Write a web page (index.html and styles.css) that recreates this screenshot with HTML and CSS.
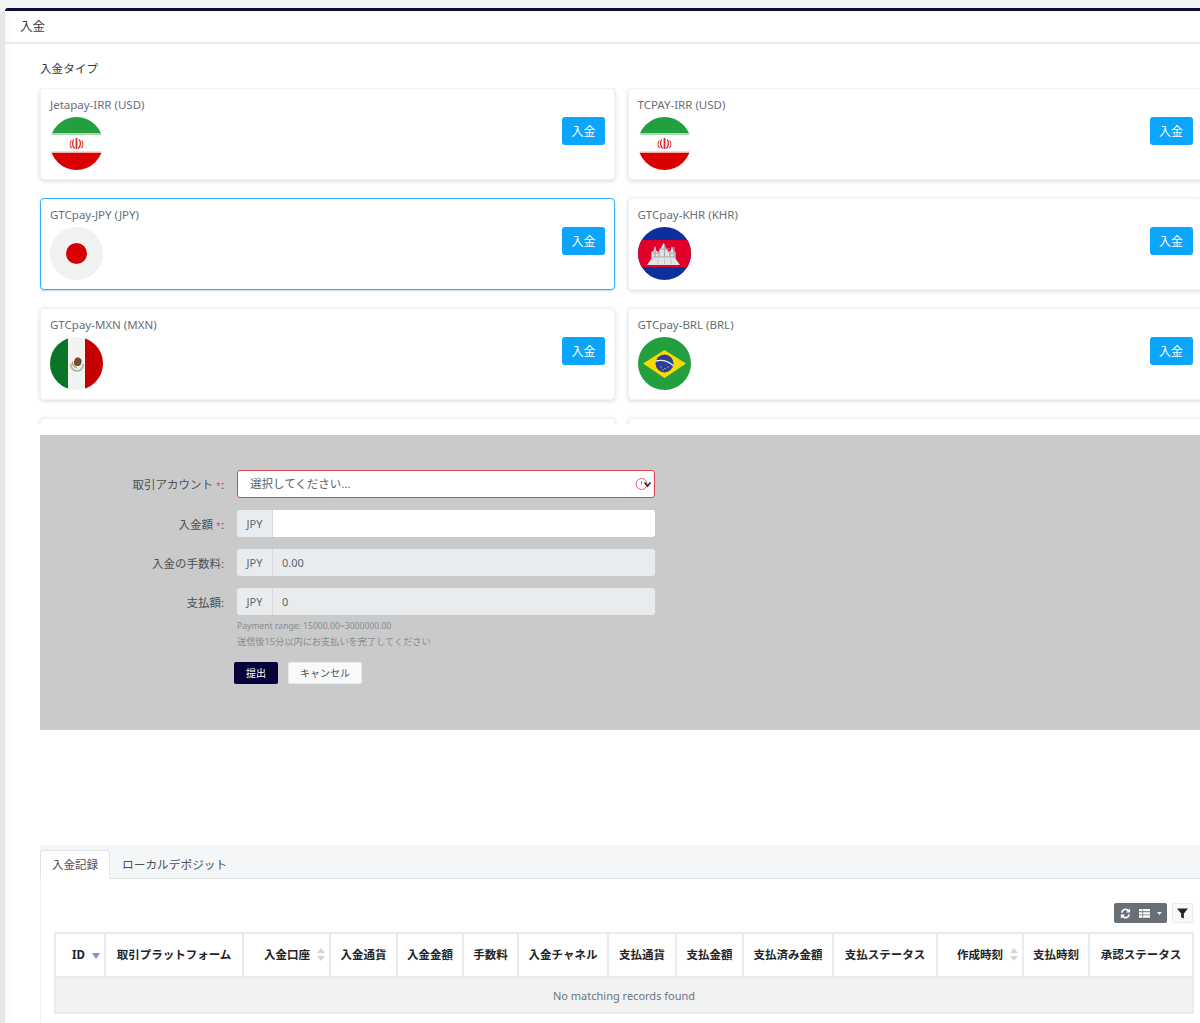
FILE: index.html
```html
<!DOCTYPE html>
<html lang="ja">
<head>
<meta charset="utf-8">
<title>入金</title>
<link rel="stylesheet" href="styles.css">
</head>
<body>
<svg class="defs" width="0" height="0" aria-hidden="true">
  <defs>
    <clipPath id="disc"><circle cx="26.5" cy="26.5" r="26.5"/></clipPath>
    <symbol id="iran" viewBox="0 0 53 53">
      <g clip-path="url(#disc)">
        <rect width="53" height="53" fill="#fff"/>
        <rect width="53" height="16" fill="#239f40"/>
        <rect y="16" width="53" height="2" fill="#a9d9b5"/>
        <rect y="36" width="53" height="17" fill="#da0000"/>
        <rect y="34.500" width="53" height="1.500" fill="#f0b0b0"/>
        <g fill="none" stroke="#dc2828">
          <path d="M26.500 21v11" stroke-width="1.800"/>
          <path d="M23.800 22.500c-2 3-1.400 7 .9 9M29.200 22.500c2 3 1.400 7-.9 9" stroke-width="1.300"/>
          <path d="M21.300 23.500c-1.800 2.600-1.400 5.800.3 7.500M31.700 23.500c1.800 2.600 1.400 5.800-.3 7.500" stroke-width="1.100"/>
        </g>
      </g>
    </symbol>
    <symbol id="japan" viewBox="0 0 53 53">
      <circle cx="26.500" cy="26.500" r="26.500" fill="#f0f1f1"/>
      <circle cx="26.500" cy="26.500" r="10.500" fill="#d80000"/>
    </symbol>
    <symbol id="cambodia" viewBox="0 0 53 53">
      <g clip-path="url(#disc)">
        <rect width="53" height="53" fill="#0c2f9c"/>
        <rect y="13" width="53" height="27" fill="#e0002b"/>
        <path d="M9 38l4.500-6.500V25l2-1 1.500-5 1.500 5 2 1 1-2 1.500-2 2.500-5 2.500 5 1.500 2 1 2 2-1 1.500-5 1.500 5 2 1v6.500l4.500 6.500z" fill="#e4e4e4"/>
        <path d="M15 26h7M31 26h7M21 22h11" stroke="#9a9a9a" stroke-width="1"/>
        <path d="M15 30h23" stroke="#a5a5a5" stroke-width="1"/>
        <path d="M17 20v10M26.500 17v13M36 20v10M21 25v5M32 25v5" stroke="#ababab" stroke-width="1.200"/>
        <path d="M20 32v5M26.500 32v5M33 32v5" stroke="#c4c4c4" stroke-width="1"/>
      </g>
    </symbol>
    <symbol id="mexico" viewBox="0 0 53 53">
      <g clip-path="url(#disc)">
        <rect width="53" height="53" fill="#f1f3f3"/>
        <rect width="18" height="53" fill="#0a7526"/>
        <rect x="35" width="18" height="53" fill="#c40000"/>
        <path d="M24 26c0-3 1-5.500 3.500-5.500S32 22 31.500 25 30 29 28 29s-4 0-4-3z" fill="#7a4a35"/>
        <path d="M20.500 27c1 5 4 7 6.500 7s5.500-2 6.500-7" fill="none" stroke="#9fb79a" stroke-width="1.500"/>
        <path d="M22.500 24.500c-.5 3 1.500 6 4.500 6.500" fill="none" stroke="#c9a866" stroke-width="1.500"/>
      </g>
    </symbol>
    <symbol id="brazil" viewBox="0 0 53 53">
      <g clip-path="url(#disc)">
        <rect width="53" height="53" fill="#239f40"/>
        <path d="M5 26.500L26.500 13 48 26.500 26.500 41z" fill="#f8dc00"/>
        <circle cx="26.500" cy="26.500" r="9" fill="#2b3f94"/>
        <path d="M18 24c6-1.500 12 0 17 4.500" fill="none" stroke="#e8edf5" stroke-width="1.400"/>
        <path d="M23 30h.1M27 31.500h.1M30 30h.1M25 33h.1" stroke="#fff" stroke-width="1" stroke-linecap="round"/>
      </g>
    </symbol>
  </defs>
</svg>

<main class="page">
  <header class="page-head">入金</header>
  <div class="page-body">
    <h2 class="section-title">入金タイプ</h2>
    <div class="card-scroll">
      <div class="card-grid">
        <article class="card">
          <div class="card-info"><div class="card-name">Jetapay-IRR (USD)</div><svg class="flag"><use href="#iran"/></svg></div>
          <button class="btn-pay" type="button">入金</button>
        </article>
        <article class="card">
          <div class="card-info"><div class="card-name">TCPAY-IRR (USD)</div><svg class="flag"><use href="#iran"/></svg></div>
          <button class="btn-pay" type="button">入金</button>
        </article>
        <article class="card card-active">
          <div class="card-info"><div class="card-name">GTCpay-JPY (JPY)</div><svg class="flag"><use href="#japan"/></svg></div>
          <button class="btn-pay" type="button">入金</button>
        </article>
        <article class="card">
          <div class="card-info"><div class="card-name">GTCpay-KHR (KHR)</div><svg class="flag"><use href="#cambodia"/></svg></div>
          <button class="btn-pay" type="button">入金</button>
        </article>
        <article class="card">
          <div class="card-info"><div class="card-name">GTCpay-MXN (MXN)</div><svg class="flag"><use href="#mexico"/></svg></div>
          <button class="btn-pay" type="button">入金</button>
        </article>
        <article class="card">
          <div class="card-info"><div class="card-name">GTCpay-BRL (BRL)</div><svg class="flag"><use href="#brazil"/></svg></div>
          <button class="btn-pay" type="button">入金</button>
        </article>
        <article class="card"></article>
        <article class="card"></article>
      </div>
    </div>

    <section class="form-panel">
      <div class="form-row">
        <label class="form-label">取引アカウント <span class="req">*</span>:</label>
        <div class="select-box">
          <span>選択してください...</span>
          <svg class="select-icon" viewBox="0 0 20 16" width="20" height="16">
            <circle cx="7.500" cy="8" r="5.500" fill="none" stroke="#e4606d" stroke-width="1"/>
            <path d="M7.500 5v3.500" stroke="#e4606d" stroke-width="1"/>
            <path d="M10.500 6.500l3 3.500 3-3.500" fill="none" stroke="#343a40" stroke-width="1.800"/>
          </svg>
        </div>
      </div>
      <div class="form-row">
        <label class="form-label">入金額 <span class="req">*</span>:</label>
        <div class="input-group"><span class="addon">JPY</span><span class="field"></span></div>
      </div>
      <div class="form-row">
        <label class="form-label">入金の手数料:</label>
        <div class="input-group"><span class="addon">JPY</span><span class="field field-ro">0.00</span></div>
      </div>
      <div class="form-row form-row-last">
        <label class="form-label">支払額:</label>
        <div class="input-group"><span class="addon">JPY</span><span class="field field-ro">0</span></div>
      </div>
      <p class="hint hint-first">Payment range: 15000.00~3000000.00</p>
      <p class="hint">送信後15分以内にお支払いを完了してください</p>
      <div class="form-actions">
        <button class="btn-submit" type="button">提出</button>
        <button class="btn-cancel" type="button">キャンセル</button>
      </div>
    </section>

    <section class="records">
      <nav class="tabs">
        <span class="tab tab-active">入金記録</span>
        <span class="tab">ローカルデポジット</span>
      </nav>
      <div class="tab-pane">
        <div class="toolbar">
          <div class="tool-group">
            <svg viewBox="0 0 14 14" width="13" height="13"><path d="M2.200 6.200A4.900 4.900 0 0 1 10.500 3l1.500-1.500V6H7.500L9.200 4.400A3 3 0 0 0 4 6.200zM11.800 7.800A4.900 4.900 0 0 1 3.500 11L2 12.500V8h4.500L4.800 9.600A3 3 0 0 0 10 7.800z" fill="#fff"/></svg>
            <svg viewBox="0 0 14 12" width="13" height="11"><path d="M1 1h12v2.500H1zM1 4.500h12V7H1zM1 8h12v2.500H1z" fill="#fff"/><path d="M5 1v9.500" stroke="#686f77" stroke-width=".8"/></svg>
            <svg viewBox="0 0 6 4" width="5" height="3"><path d="M0 0h6L3 4z" fill="#fff"/></svg>
          </div>
          <div class="tool-filter">
            <svg viewBox="0 0 12 12" width="11" height="11"><path d="M0 .5h12L7.500 6v5.500L4.500 10V6z" fill="#212529"/></svg>
          </div>
        </div>
        <table class="records-table">
          <thead>
            <tr>
              <th class="c1 th-sort"><span class="th-in">ID<i class="sort-down"></i></span></th>
              <th class="c2">取引プラットフォーム</th>
              <th class="c3 th-sort"><span class="th-in">入金口座<i class="sort-both"></i></span></th>
              <th class="c4">入金通貨</th>
              <th class="c5">入金金額</th>
              <th class="c6">手数料</th>
              <th class="c7">入金チャネル</th>
              <th class="c8">支払通貨</th>
              <th class="c9">支払金額</th>
              <th class="c10">支払済み金額</th>
              <th class="c11">支払ステータス</th>
              <th class="c12 th-sort"><span class="th-in">作成時刻<i class="sort-both"></i></span></th>
              <th class="c13">支払時刻</th>
              <th class="c14">承認ステータス</th>
            </tr>
          </thead>
          <tbody>
            <tr><td colspan="14">No matching records found</td></tr>
          </tbody>
        </table>
      </div>
    </section>
  </div>
</main>
</body>
</html>
```

FILE: styles.css
```css
* { box-sizing: border-box; }

html, body {
  margin: 0;
  height: 1023px;
  overflow: hidden;
}

body {
  background: #f3f4f6;
  font-family: "Noto Sans", "Noto Sans CJK JP", sans-serif;
  font-size: 11.500px;
  color: #495057;
  position: relative;
}

body::before {
  content: "";
  position: absolute;
  left: 0;
  top: 12px;
  bottom: 0;
  width: 5px;
  background: #e5e6ea;
}

.defs { position: absolute; }

.page {
  position: relative;
  margin: 8px 0 0 5px;
  width: 1195px;
  height: 1015px;
  background: #fff;
  border-top: 3px solid #0c0a3a;
  border-top-left-radius: 3px;
  box-shadow: inset 10px 0 10px -10px rgba(0, 0, 0, .06);
  overflow: hidden;
}

.page-head {
  height: 33px;
  padding-left: 15px;
  line-height: 32px;
  font-size: 12.500px;
  color: #343a40;
  border-bottom: 2px solid #e9eaec;
}

.page-body {
  padding-left: 35px;
  width: 1300px;
}

.section-title {
  margin: 0;
  padding-top: 15px;
  height: 44px;
  line-height: 20px;
  font-size: 11.600px;
  font-weight: 400;
  color: #343a40;
}

.card-scroll {
  height: 336px;
  overflow: hidden;
  margin: 0 -6px;
  padding: 0 6px;
}

.card-grid {
  display: grid;
  grid-template-columns: 575px 575px;
  column-gap: 12.500px;
  row-gap: 18px;
}

.card {
  display: flex;
  justify-content: space-between;
  align-items: flex-start;
  height: 92px;
  padding: 8px 9px;
  background: #fff;
  border: 1px solid #f1f2f3;
  border-radius: 4px;
  box-shadow: 0 1px 4px rgba(0, 0, 0, .16);
}

.card-active {
  border-color: #2cb0fa;
  box-shadow: 0 1px 2px rgba(44, 176, 250, .4);
}

.card-name {
  font-size: 11.500px;
  line-height: 16px;
  color: #666e76;
}

.flag {
  display: block;
  width: 53px;
  height: 53px;
  margin-top: 4px;
}

.btn-pay {
  width: 43px;
  height: 28px;
  margin-top: 20px;
  padding: 0;
  border: 0;
  border-radius: 3px;
  background: #0ba5fb;
  color: #fff;
  font: inherit;
  font-size: 12px;
}

.form-panel {
  width: 1160px;
  height: 295px;
  margin-top: 11px;
  padding-top: 35px;
  background: #cacaca;
}

.form-row {
  display: flex;
  align-items: center;
  margin-bottom: 12px;
  height: 27px;
}

.form-row:first-child { height: 28px; }
.form-row-last { margin-bottom: 0; }

.form-label {
  width: 184px;
  margin-right: 13px;
  text-align: right;
  color: #495057;
  white-space: nowrap;
}

.req {
  font-size: 9px;
  color: #d9505e;
}

.select-box {
  position: relative;
  width: 418px;
  height: 28px;
  padding-left: 12px;
  line-height: 26px;
  background: #fff;
  border: 1px solid #dc4453;
  border-radius: 3px;
  color: #5a6268;
}

.select-icon {
  position: absolute;
  right: 0;
  top: 5px;
}

.input-group {
  display: flex;
  width: 418px;
  height: 27px;
}

.addon {
  width: 36px;
  line-height: 27px;
  text-align: center;
  font-size: 11px;
  color: #5e666d;
  background: #e9ecef;
  border-radius: 3px 0 0 3px;
  border-right: 1px solid #d6d8db;
}

.field {
  flex: 1;
  padding-left: 9px;
  line-height: 27px;
  background: #fff;
  border-radius: 0 3px 3px 0;
}

.field-ro {
  background: #e9ecef;
  font-size: 11px;
  color: #5e666d;
}

.hint {
  margin: 0 0 0 197px;
  height: 16px;
  line-height: 16px;
  font-size: 9.200px;
  color: #858b91;
}

.hint-first {
  margin-top: 3px;
  font-size: 8.600px;
}

.form-actions {
  display: flex;
  margin: 12px 0 0 194px;
  gap: 10px;
}

.btn-submit, .btn-cancel {
  height: 22px;
  padding: 0 0 2px;
  border-radius: 2px;
  font: inherit;
  font-size: 10px;
}

.btn-submit {
  width: 44px;
  border: 0;
  background: #05023a;
  color: #fff;
}

.btn-cancel {
  width: 74px;
  border: 1px solid #e9ecef;
  background: #f8f9fa;
  color: #495057;
}

.records {
  margin-top: 115px;
}

.tabs {
  display: flex;
  height: 34px;
  padding-top: 5px;
  background: #f5f6f7;
  border-bottom: 1px solid #dfe3e6;
}

.tab {
  height: 29px;
  padding: 0 12px;
  line-height: 28px;
  font-size: 11.700px;
  color: #495057;
  white-space: nowrap;
}

.tab-active {
  width: 70px;
  padding: 0 11px;
  font-size: 11.500px;
  background: #fff;
  border: 1px solid #dfe3e6;
  border-bottom-color: #fff;
  border-radius: 3px 3px 0 0;
}

.tab-pane {
  width: 1160px;
  height: 200px;
  padding: 24px 7px 0 13px;
  border-left: 1px solid #f0f1f2;
  overflow: hidden;
}

.toolbar {
  display: flex;
  justify-content: flex-end;
  gap: 5px;
  height: 20px;
  margin-bottom: 9px;
}

.tool-group {
  display: flex;
  align-items: center;
  justify-content: center;
  gap: 6px;
  width: 53px;
  background: #686f77;
  border-radius: 2px;
}

.tool-filter {
  display: flex;
  align-items: center;
  justify-content: center;
  width: 21px;
  background: #f8f9fa;
  border: 1px solid #e9ecef;
  border-radius: 2px;
}

.records-table {
  width: 1138px;
  table-layout: fixed;
  border-collapse: collapse;
}

.records-table th,
.records-table td {
  border: 2px solid #e9ecef;
}

.records-table th {
  height: 44px;
  padding: 0 0 2px;
  font-size: 11.500px;
  font-weight: 700;
  color: #212529;
  text-align: center;
  white-space: nowrap;
}

.records-table .th-sort {
  text-align: right;
  padding-right: 4px;
}

.records-table td {
  height: 36px;
  font-size: 11px;
  text-align: center;
  color: #6c757d;
  background: #f2f2f2;
  padding: 0;
}

.th-in {
  display: inline-flex;
  align-items: center;
  gap: 7px;
}

.sort-down {
  width: 0;
  height: 0;
  margin-top: 4px;
  border: 4px solid transparent;
  border-top: 6px solid #7d93c4;
  border-bottom: 0;
}

.sort-both {
  position: relative;
  width: 8px;
  height: 13px;
}

.sort-both::before,
.sort-both::after {
  content: "";
  position: absolute;
  left: 0;
  border: 4px solid transparent;
}

.sort-both::before {
  top: 0;
  border-top: 0;
  border-bottom: 5px solid #d4d6d8;
}

.sort-both::after {
  bottom: 0;
  border-bottom: 0;
  border-top: 5px solid #d4d6d8;
}

.c1 { width: 50px; }
.c2 { width: 138px; }
.c3 { width: 87px; }
.c4 { width: 67px; }
.c5 { width: 66px; }
.c6 { width: 55px; }
.c7 { width: 90px; }
.c8 { width: 68px; }
.c9 { width: 67px; }
.c10 { width: 90px; }
.c11 { width: 104px; }
.c12 { width: 86px; }
.c13 { width: 66px; }
.c14 { width: 104px; }
```
